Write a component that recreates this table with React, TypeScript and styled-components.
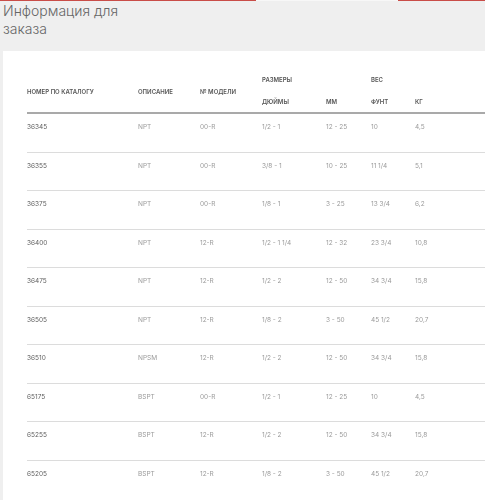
import React from "react";
import styled, { createGlobalStyle } from "styled-components";

const Global = createGlobalStyle`
  html, body { margin: 0; padding: 0; background: #efefef; overflow: hidden; }
  body { font-family: Inter, "Open Sans", sans-serif; -webkit-font-smoothing: antialiased; }
`;

const Page = styled.div`
  width: 485px;
  min-height: 500px;
  background: #efefef;
`;

const TabStrip = styled.div`
  display: flex;
  height: 1px;
`;

const TabLine = styled.div<{ $active?: boolean; $w?: number }>`
  height: 1px;
  background: ${(p) => (p.$active ? "#c94d48" : "#f7f7f7")};
  ${(p) => (p.$w ? `width: ${p.$w}px;` : "flex: 1;")}
`;

const Title = styled.h2`
  margin: 0;
  padding: 1px 0 0 3px;
  width: 125px;
  font-family: Inter, "Open Sans", sans-serif;
  font-weight: 300;
  font-size: 14px;
  line-height: 18px;
  color: #666;
`;

const Card = styled.div`
  margin: 13px 0 0 3px;
  background: #fff;
  padding: 20px 0 40px 24px;
  will-change: transform;
`;

const Table = styled.table`
  width: 100%;
  border-collapse: collapse;
  table-layout: fixed;
`;

const Col = styled.col<{ $w?: number }>`
  ${(p) => (p.$w ? `width: ${p.$w}px;` : "")}
`;

const Th = styled.th<{ $pt?: number; $pb?: number }>`
  text-align: left;
  vertical-align: middle;
  padding: ${(p) => p.$pt ?? 5}px 0 ${(p) => p.$pb ?? 5}px 0;
  font-family: Inter, "Open Sans", sans-serif;
  font-size: 6px;
  line-height: 8px;
  font-weight: 600;
  color: #555;
  text-transform: uppercase;
  white-space: nowrap;
`;

const HeadRow = styled.tr<{ $last?: boolean }>`
  ${(p) => (p.$last ? "border-bottom: 2px solid #a9a9a9;" : "")}
`;

const Row = styled.tr`
  & + & {
    border-top: 1px solid #dcdcdc;
  }
`;

const Td = styled.td<{ $main?: boolean; $tall?: boolean }>`
  padding: 9px 0 ${(p) => (p.$tall ? 21 : 20)}px 0;
  font-family: Inter, "Open Sans", sans-serif;
  font-size: 6.5px;
  line-height: 8px;
  color: ${(p) => (p.$main ? "#5e5e5e" : "#9a9a9a")};
  white-space: nowrap;
`;

type R = [string, string, string, string, string, string, string];

const rows: R[] = [
  ["36345", "NPT", "00-R", "1/2 - 1", "12 - 25", "10", "4,5"],
  ["36355", "NPT", "00-R", "3/8 - 1", "10 - 25", "11 1/4", "5,1"],
  ["36375", "NPT", "00-R", "1/8 - 1", "3 - 25", "13 3/4", "6,2"],
  ["36400", "NPT", "12-R", "1/2 - 1 1/4", "12 - 32", "23 3/4", "10,8"],
  ["36475", "NPT", "12-R", "1/2 - 2", "12 - 50", "34 3/4", "15,8"],
  ["36505", "NPT", "12-R", "1/8 - 2", "3 - 50", "45 1/2", "20,7"],
  ["36510", "NPSM", "12-R", "1/2 - 2", "12 - 50", "34 3/4", "15,8"],
  ["65175", "BSPT", "00-R", "1/2 - 1", "12 - 25", "10", "4,5"],
  ["65255", "BSPT", "12-R", "1/2 - 2", "12 - 50", "34 3/4", "15,8"],
  ["65205", "BSPT", "12-R", "1/8 - 2", "3 - 50", "45 1/2", "20,7"],
];

export default function App() {
  return (
    <Page>
      <Global />
      <TabStrip>
        <TabLine $active $w={256} />
        <TabLine $w={142} />
        <TabLine $active />
      </TabStrip>
      <Title>Информация для заказа</Title>
      <Card>
        <Table>
          <colgroup>
            <Col $w={111} />
            <Col $w={62} />
            <Col $w={62} />
            <Col $w={64} />
            <Col $w={45} />
            <Col $w={44} />
            <Col $w={40} />
            <Col />
          </colgroup>
          <thead>
            <HeadRow>
              <Th rowSpan={2}>Номер по каталогу</Th>
              <Th rowSpan={2}>Описание</Th>
              <Th rowSpan={2}>№ модели</Th>
              <Th colSpan={2}>Размеры</Th>
              <Th colSpan={2}>Вес</Th>
              <Th />
            </HeadRow>
            <HeadRow $last>
              <Th $pt={9} $pb={6}>Дюймы</Th>
              <Th $pt={9} $pb={6}>мм</Th>
              <Th $pt={9} $pb={6}>Фунт</Th>
              <Th $pt={9} $pb={6}>кг</Th>
              <Th $pt={9} $pb={6} />
            </HeadRow>
          </thead>
          <tbody>
            {rows.map((r, ri) => (
              <Row key={r[0]}>
                {r.map((c, i) => (
                  <Td key={i} $main={i === 0} $tall={ri % 2 === 0}>
                    {c}
                  </Td>
                ))}
                <Td $tall={ri % 2 === 0} />
              </Row>
            ))}
          </tbody>
        </Table>
      </Card>
    </Page>
  );
}
